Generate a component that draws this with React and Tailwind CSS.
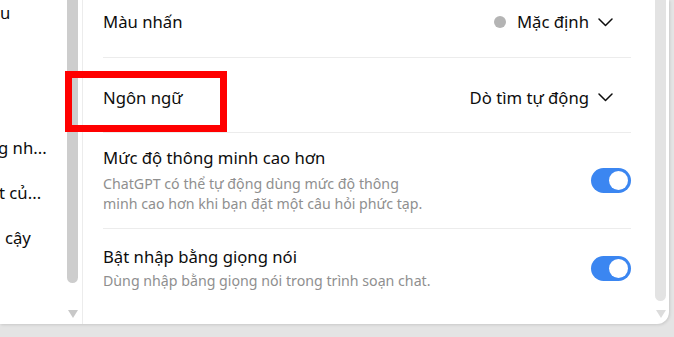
import React from "react";

function Chevron() {
  return (
    <svg width="15" height="9" viewBox="0 0 15 9" fill="none" className="ml-[9px]">
      <path d="M1 1l6.5 6.5L14 1" stroke="#0d0d0d" strokeWidth="1.5" strokeLinecap="round" strokeLinejoin="round" />
    </svg>
  );
}

function Toggle() {
  return (
    <div className="flex h-[25px] w-[40px] shrink-0 items-center justify-end rounded-full bg-[#3b86f1] px-[3px]">
      <div className="h-[19px] w-[19px] rounded-full bg-white" />
    </div>
  );
}

export default function App() {
  const font = { fontFamily: '"Noto Sans", "Open Sans", sans-serif' };
  return (
    <div className="relative flex h-[337px] w-[674px] flex-col overflow-hidden bg-[#e4e4e4]" style={font}>
      <div className="flex h-[324px] w-[669px] shrink-0 overflow-hidden rounded-br-[12px] bg-white shadow-[1px_1px_3px_rgba(0,0,0,0.12)]">
        {/* sidebar */}
        <div className="flex w-[83px] shrink-0 border-r border-[#ececec]">
          <div className="flex w-[67px] flex-col overflow-hidden text-[16.7px] text-[#0d0d0d]">
            <div className="flex h-[45px] shrink-0 items-center -mt-[10px] whitespace-nowrap">u</div>
            <div className="h-[45px] shrink-0" />
            <div className="h-[45px] shrink-0" />
            <div className="flex h-[45px] shrink-0 items-center whitespace-nowrap -ml-[2px]">g nh...</div>
            <div className="flex h-[45px] shrink-0 items-center whitespace-nowrap -ml-[1px]">t củ...</div>
            <div className="flex h-[45px] shrink-0 items-center whitespace-nowrap pl-[5px]">cậy</div>
          </div>
          <div className="flex w-[11px] shrink-0 flex-col items-center">
            <div className="h-[283px] w-[11px] rounded-b-[6px] bg-[#cdcdcd]" />
            <div className="mt-[27px] h-0 w-0 border-x-[5px] border-t-[8px] border-x-transparent border-t-[#c8c8c8]" />
          </div>
        </div>

        {/* content */}
        <div className="flex min-w-0 flex-1 flex-col pl-[20px] pr-[24px] text-[#0d0d0d]">
          <div className="flex h-[58px] shrink-0 items-start justify-between border-b border-[#ececec] pt-[10px]">
            <span className="text-[16.7px] leading-[24px]">Màu nhấn</span>
            <div className="mr-[18px] flex items-center">
              <span className="mr-[11px] h-[12px] w-[12px] rounded-full bg-[#b4b4b4]" />
              <span className="text-[16.7px] leading-[24px]">Mặc định</span>
              <Chevron />
            </div>
          </div>
          <div className="flex h-[75px] shrink-0 items-center justify-between border-b border-[#ececec] pt-[5px]">
            <span className="text-[16.7px] leading-[24px]">Ngôn ngữ</span>
            <div className="mr-[18px] flex items-center">
              <span className="text-[16.7px] leading-[24px]">Dò tìm tự động</span>
              <Chevron />
            </div>
          </div>
          <div className="flex h-[96px] shrink-0 items-center justify-between border-b border-[#ececec] pb-[1px]">
            <div className="flex flex-col">
              <span className="text-[16.7px] leading-[24px]">Mức độ thông minh cao hơn</span>
              <span className="mt-[4px] text-[14.2px] leading-[20px] text-[#8f8f8f]">
                ChatGPT có thể tự động dùng mức độ thông
                <br />
                minh cao hơn khi bạn đặt một câu hỏi phức tạp.
              </span>
            </div>
            <Toggle />
          </div>
          <div className="flex h-[78px] shrink-0 items-center justify-between">
            <div className="flex flex-col">
              <span className="text-[16.7px] leading-[24px]">Bật nhập bằng giọng nói</span>
              <span className="mt-[2px] text-[14.2px] leading-[20px] text-[#8f8f8f]">
                Dùng nhập bằng giọng nói trong trình soạn chat.
              </span>
            </div>
            <Toggle />
          </div>
        </div>

        {/* right scrollbar */}
        <div className="flex w-[14px] shrink-0 flex-col">
          <div className="flex w-[11px] flex-col items-center">
            <div className="h-[301px] w-[11px] rounded-b-[6px] bg-[#e3e3e3]" />
            <div className="mt-[9px] h-0 w-0 border-x-[5px] border-t-[8px] border-x-transparent border-t-[#dcdcdc]" />
          </div>
        </div>
      </div>

      {/* highlight box */}
      <div className="absolute left-[65px] top-[71px] h-[61px] w-[162px] border-[7px] border-[#ff0000]" />
    </div>
  );
}
